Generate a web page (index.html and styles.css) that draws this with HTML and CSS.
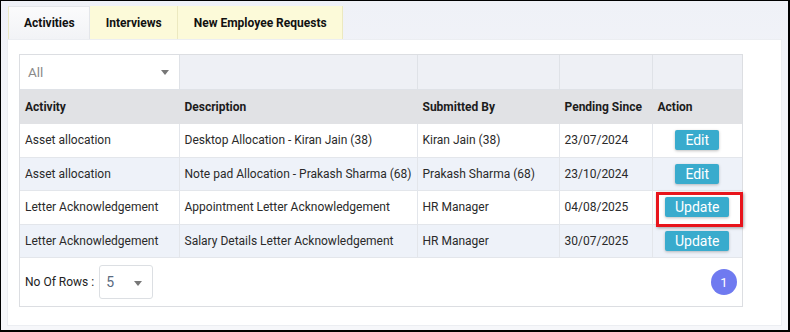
FILE: index.html
```html
<!DOCTYPE html>
<html>
<head>
  <title>Pending Activities</title>
  <link rel="stylesheet" href="styles.css">
</head>
<body>
  <div class="frame">
    <div class="tabs">
      <div class="tab active">Activities</div>
      <div class="tab">Interviews</div>
      <div class="tab">New Employee Requests</div>
    </div>

    <div class="panel">
      <div class="grid">
        <table>
          <colgroup>
            <col style="width:159px">
            <col style="width:238px">
            <col style="width:142px">
            <col style="width:93px">
            <col style="width:90px">
          </colgroup>
          <thead>
            <tr class="filter">
              <td class="filter-select"><span>All</span><i class="caret"></i></td>
              <td></td>
              <td></td>
              <td></td>
              <td></td>
            </tr>
            <tr class="head">
              <th>Activity</th>
              <th>Description</th>
              <th>Submitted By</th>
              <th>Pending Since</th>
              <th>Action</th>
            </tr>
          </thead>
          <tbody>
            <tr>
              <td>Asset allocation</td>
              <td>Desktop Allocation - Kiran Jain (38)</td>
              <td>Kiran Jain (38)</td>
              <td>23/07/2024</td>
              <td class="act"><button class="btn">Edit</button></td>
            </tr>
            <tr>
              <td>Asset allocation</td>
              <td>Note pad Allocation - Prakash Sharma (68)</td>
              <td>Prakash Sharma (68)</td>
              <td>23/10/2024</td>
              <td class="act"><button class="btn">Edit</button></td>
            </tr>
            <tr>
              <td>Letter Acknowledgement</td>
              <td>Appointment Letter Acknowledgement</td>
              <td>HR Manager</td>
              <td>04/08/2025</td>
              <td class="act"><button class="btn marked">Update</button></td>
            </tr>
            <tr>
              <td>Letter Acknowledgement</td>
              <td>Salary Details Letter Acknowledgement</td>
              <td>HR Manager</td>
              <td>30/07/2025</td>
              <td class="act"><button class="btn">Update</button></td>
            </tr>
          </tbody>
        </table>

        <div class="pager">
          <span class="rows-label">No Of Rows :</span>
          <div class="rows-select"><span>5</span><i class="caret"></i></div>
          <span class="page">1</span>
        </div>
      </div>
    </div>
  </div>
</body>
</html>
```

FILE: styles.css
```css
body {
  margin: 0;
  font-family: Roboto, 'Liberation Sans', sans-serif;
  font-size: 12px;
  color: #222;
}

.frame {
  width: 790px;
  height: 332px;
  box-sizing: border-box;
  border-top: 1px solid #000;
  border-left: 1px solid #000;
  border-right: 2px solid #000;
  border-bottom: 2px solid #000;
  background: linear-gradient(to bottom, #eff1f7, #f6f7fa 60%);
  padding-top: 5px;
}

.tabs {
  display: flex;
  margin-left: 7px;
  height: 33px;
}

.tab {
  display: flex;
  align-items: center;
  padding: 0 15px 0 16px;
  font-weight: bold;
  background: #fcfad9;
  border-right: 1px solid #ece9c0;
  color: #111;
}

.tab.active {
  background: linear-gradient(to bottom, #fbfbfc, #f2f3f6);
  border: 1px solid #e4e6ea;
  border-bottom: none;
  border-left: 1px solid #ebe9c6;
  padding: 0 14px 0 15px;
}

.panel {
  margin: 0 6px;
  height: 287px;
  box-sizing: border-box;
  background: #fff;
  border: 1px solid #eceef2;
  padding: 14px 11px;
}

.grid {
  width: 724px;
  border: 1px solid #dcdee2;
  box-sizing: border-box;
}

table {
  width: 100%;
  border-collapse: collapse;
  table-layout: fixed;
}

td, th {
  padding: 0 5px;
  text-align: left;
  white-space: nowrap;
  border: 1px solid #e3e6eb;
}

td:first-child, th:first-child {
  border-left: none;
  padding-left: 5px;
}

td:last-child, th:last-child {
  border-right: none;
}

.filter td {
  height: 34px;
  background: #eef0f5;
  border-color: #dfe2e7;
  border-top: none;
}

.filter td.filter-select {
  background: #fff;
  color: #8a8a8a;
  font-size: 13.5px;
  padding-left: 8px;
  position: relative;
}

.caret {
  position: absolute;
  right: 10px;
  top: 15px;
  border-left: 4px solid transparent;
  border-right: 4px solid transparent;
  border-top: 5px solid #777;
}

.head th {
  height: 33px;
  background: #e1e2e5;
  font-weight: bold;
  color: #1c1c1c;
  border-color: #e1e2e5;
}

tbody tr {
  height: 33.5px;
}

tbody tr:nth-child(even) td {
  background: #eef2f9;
}

tbody td {
  color: #2a2a2a;
}

td.act {
  text-align: center;
  padding: 0;
}

.btn {
  font-family: Roboto, 'Liberation Sans', sans-serif;
  font-size: 14px;
  color: #fff;
  background: #39abcd;
  border: none;
  border-radius: 2px;
  height: 20px;
  padding: 0 10px;
  box-shadow: 0 1px 3px rgba(0, 0, 0, 0.25);
  vertical-align: middle;
}

.btn.marked {
  position: relative;
}

.btn.marked::after {
  content: "";
  position: absolute;
  left: -9px;
  right: -14px;
  top: -5px;
  bottom: -10px;
  border: 3px solid #e8141b;
  box-shadow: 1px 1px 3px rgba(0, 0, 0, 0.35);
}

.pager {
  display: flex;
  align-items: center;
  height: 48px;
  padding: 0 5px;
}

.rows-label {
  color: #222;
  margin-right: 5px;
}

.rows-select {
  position: relative;
  width: 54px;
  height: 34px;
  box-sizing: border-box;
  border: 1px solid #dcdfe3;
  border-radius: 3px;
  padding-left: 6px;
  display: flex;
  align-items: center;
  font-size: 14px;
  color: #5a6a80;
}

.rows-select .caret {
  top: 15px;
  right: 10px;
}

.page {
  margin-left: auto;
  width: 26px;
  height: 26px;
  border-radius: 50%;
  background: #6f7af0;
  color: #fff;
  font-size: 13px;
  display: flex;
  align-items: center;
  justify-content: center;
}
```
